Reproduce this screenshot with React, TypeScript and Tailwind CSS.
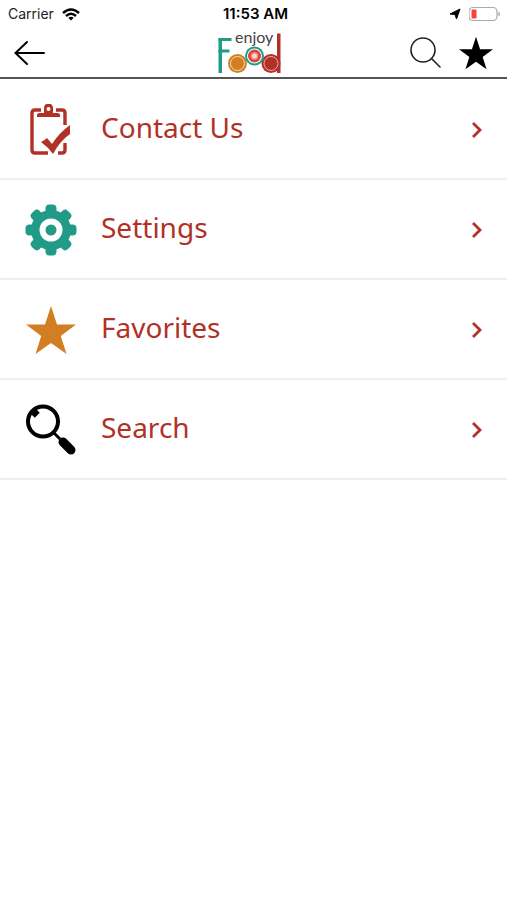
import { ReactNode } from 'react';

interface MenuItem {
  label: string;
  href: string;
  icon: ReactNode;
}

const STAR = '25,0 31,18.5 50,18.5 34.8,30 40.5,48 25,37 9.5,48 15.2,30 0,18.5 19,18.5';

function ClipboardIcon() {
  return (
    <svg viewBox="0 0 52 52" className="size-13" fill="none" aria-hidden="true">
      <path d="M16 6H10Q7 6 7 9V46Q7 49 10 49H23" stroke="#b23127" strokeWidth="3.4" />
      <path d="M31 6H37Q40 6 40 9V21M40 39V46Q40 49 37 49H33" stroke="#b23127" strokeWidth="3.4" />
      <path
        fill="#b23127"
        fillRule="evenodd"
        d="M12 13V11Q12 9 15 9H19V4A4.500 4.500 0 0 1 28 4V9H32Q35 9 35 11V13ZM23.500 3A2 2 0 1 0 23.500 7A2 2 0 1 0 23.500 3Z"
      />
      <path fill="#b23127" d="M16 38Q20 36 22 34L27 40Q34 29 45 21V30Q35 37 28 50Q23 43 16 38Z" />
    </svg>
  );
}

function GearIcon() {
  return (
    <svg viewBox="0 0 52 52" className="size-13" aria-hidden="true">
      <g fill="#219b87">
        <circle cx="26" cy="26" r="20" />
        {[0, 45, 90, 135].map((angle) => (
          <rect key={angle} x="20.5" y="0.5" width="11" height="51" rx="4" transform={`rotate(${angle} 26 26)`} />
        ))}
      </g>
      <circle cx="26" cy="26" r="11.5" fill="#fff" />
      <circle cx="26" cy="26" r="5.5" fill="#219b87" />
    </svg>
  );
}

function StarIcon() {
  return (
    <svg viewBox="-1 -2 52 52" className="size-13" fill="#d27f24" aria-hidden="true">
      <polygon points={STAR} />
    </svg>
  );
}

function MagnifierIcon() {
  return (
    <svg viewBox="0 0 52 52" className="size-13" fill="none" stroke="#000" aria-hidden="true">
      <circle cx="18" cy="17.5" r="15" strokeWidth="4" />
      <path d="M8 12L13 7" strokeWidth="5" />
      <path d="M28 28L35 35" strokeWidth="3" />
      <path d="M38 38L46 46" strokeWidth="9" strokeLinecap="round" />
    </svg>
  );
}

function Logo() {
  return (
    <svg viewBox="0 1.5 72 46" className="h-[46px] w-[72px] overflow-visible" role="img" aria-label="enjoy Food">
      <rect x="0.5" y="9.5" width="3.5" height="35" fill="#219b87" />
      <rect x="0.5" y="9.5" width="13" height="3" fill="#219b87" />
      <rect x="0.5" y="21" width="11" height="3" fill="#219b87" />
      <rect x="59" y="5" width="3.5" height="39.5" fill="#b23127" />
      <circle cx="19.5" cy="35" r="9.5" fill="#d27f24" />
      <circle cx="19.5" cy="35" r="7" fill="none" stroke="#f5dcae" strokeWidth="1" />
      <circle cx="53" cy="35" r="9.5" fill="#b23127" />
      <circle cx="53" cy="35" r="7" fill="none" stroke="#e7aaa2" strokeWidth="1" />
      <circle cx="36.500" cy="27.500" r="9.500" fill="#219b87" />
      <circle cx="36.500" cy="27.500" r="7.500" fill="#fff" />
      <circle cx="36.500" cy="27.500" r="6.500" fill="#d8453d" />
      <circle cx="36.500" cy="27.500" r="3" fill="#fbd8d2" stroke="#f0968b" strokeWidth="1.5" />
      <text x="17" y="14" fontSize="16" fontFamily="Lato, sans-serif" fill="#444">
        enjoy
      </text>
    </svg>
  );
}

const MENU: MenuItem[] = [
  { label: 'Contact Us', href: '#contact', icon: <ClipboardIcon /> },
  { label: 'Settings', href: '#settings', icon: <GearIcon /> },
  { label: 'Favorites', href: '#favorites', icon: <StarIcon /> },
  { label: 'Search', href: '#search', icon: <MagnifierIcon /> },
];

function StatusBar() {
  return (
    <div className="grid h-7 grid-cols-[1fr_auto_1fr] items-center pr-1 pl-2 font-['Inter',sans-serif] text-sm text-[#222]">
      <div className="flex items-center gap-2">
        <span>Carrier</span>
        <svg viewBox="0 0 18 13" className="h-[13px] w-[18px]" fill="none" stroke="#000" strokeWidth="2.4" aria-hidden="true">
          <path d="M1 5Q9 -2 17 5M4 8Q9 3.500 14 8" />
          <path d="M6.300 9.800Q9 7.800 11.700 9.800L9 12.500Z" fill="#000" stroke="none" />
        </svg>
      </div>
      <span className="text-[15px] font-semibold text-black">11:53 AM</span>
      <div className="flex items-center justify-end gap-2">
        <svg viewBox="0 0 12 12" className="size-3" stroke="#000" strokeWidth="1" strokeLinejoin="round" aria-hidden="true">
          <path d="M11 1L7.500 11L6 6.500L1 6Z" />
        </svg>
        <svg viewBox="0 0 34 16" className="h-4 w-[34px]" fill="none" aria-hidden="true">
          <rect x="0" y="1.5" width="28" height="13" rx="4" stroke="#aaa" strokeWidth="1.2" />
          <rect x="2.5" y="3.5" width="5" height="9" rx="1" fill="#f8423c" />
          <path d="M29.500 5.500Q32.500 8 29.500 10.500Z" fill="#999" />
        </svg>
      </div>
    </div>
  );
}

export default function App() {
  return (
    <div className="min-h-screen bg-white">
      <header className="border-b-2 border-[#555]">
        <StatusBar />
        <div className="grid h-[49px] grid-cols-[1fr_auto_1fr] items-center px-3.5">
          <button type="button" aria-label="Back" className="justify-self-start">
            <svg viewBox="0 0 32 28" className="h-7 w-8" fill="none" stroke="#000" strokeWidth="2" strokeLinecap="round" aria-hidden="true">
              <path d="M13 3L1.500 14L13 25M1.500 14H30" />
            </svg>
          </button>
          <Logo />
          <div className="flex items-center justify-end gap-4">
            <button type="button" aria-label="Search">
              <svg viewBox="0 0 34 34" className="size-[34px]" fill="none" stroke="#222" strokeWidth="1.6" strokeLinecap="round" aria-hidden="true">
                <circle cx="14" cy="14" r="12" />
                <path d="M22.500 22.500L31 31" />
              </svg>
            </button>
            <button type="button" aria-label="Favorites">
              <svg viewBox="0 -1 50 50" className="size-[34px]" fill="#000" aria-hidden="true">
                <polygon points={STAR} />
              </svg>
            </button>
          </div>
        </div>
      </header>

      <nav className="pt-px">
        <ul>
          {MENU.map((item) => (
            <li key={item.label}>
              <a href={item.href} className="flex h-25 items-center border-b-2 border-[#eee] pt-0.5 pr-6 pl-[25px] text-[#b23127]">
                {item.icon}
                <span className="ml-6 flex-1 pb-1.5 font-['Noto_Sans',sans-serif] text-[28px] leading-8">{item.label}</span>
                <svg viewBox="0 0 12 16" className="h-4 w-3" fill="none" stroke="currentColor" strokeWidth="2.8" aria-hidden="true">
                  <path d="M2 1L9 8L2 15" />
                </svg>
              </a>
            </li>
          ))}
        </ul>
      </nav>
    </div>
  );
}
